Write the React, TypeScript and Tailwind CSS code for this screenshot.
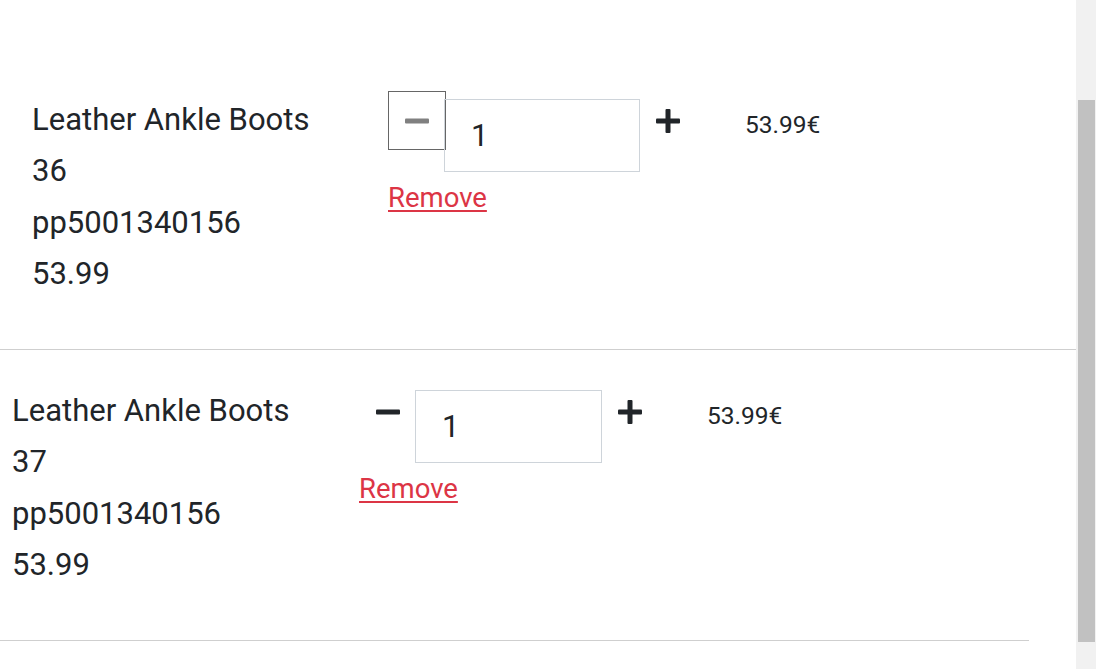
type Item = {
  name: string;
  size: string;
  sku: string;
  price: string;
};

const items: Item[] = [
  { name: "Leather Ankle Boots", size: "36", sku: "pp5001340156", price: "53.99" },
  { name: "Leather Ankle Boots", size: "37", sku: "pp5001340156", price: "53.99" },
];

export default function App() {
  return (
    <div
      className="flex h-[669px] w-[1096px] overflow-hidden bg-white text-[#212529]"
      style={{ fontFamily: "Roboto, 'Noto Sans', sans-serif" }}
    >
      <main className="flex-1">
        <div className="h-[59px]" />
        <CartRow item={items[0]} focused />
        <CartRow item={items[1]} />
      </main>
      <div className="flex w-[20px] flex-col bg-[#f1f1f1] pl-[2px] pr-[1px] pt-[100px] pb-[27px]">
        <div className="flex-1 bg-[#c1c1c1]" />
      </div>
    </div>
  );
}

function MinusIcon() {
  return (
    <svg width="24" height="6" viewBox="0 0 24 6">
      <rect x="0" y="0.5" width="24" height="5" rx="1" fill="currentColor" />
    </svg>
  );
}

function PlusIcon() {
  return (
    <svg width="24" height="24" viewBox="0 0 24 24">
      <rect x="0" y="9.5" width="24" height="5" rx="1" fill="currentColor" />
      <rect x="9.5" y="0" width="5" height="24" rx="1" fill="currentColor" />
    </svg>
  );
}

function CartRow({ item, focused = false }: { item: Item; focused?: boolean }) {
  return (
    <div
      className={`flex h-[291px] border-b border-[#cfcfcf] ${
        focused ? "w-[1076px]" : "w-[1029px]"
      }`}
    >
      <div
        className={`pt-[35px] text-[31px] leading-[51.4px] ${
          focused ? "w-[388px] pl-[32px]" : "w-[359px] pl-[12px]"
        }`}
      >
        <div>{item.name}</div>
        <div>{item.size}</div>
        <div>{item.sku}</div>
        <div>{item.price}</div>
      </div>

      <div className="flex flex-col pt-[32px]">
        <div className="flex items-start">
          <button
            className={`flex h-[59px] w-[58px] items-center justify-center ${
              focused ? "border border-[#666666] text-[#808080]" : "text-[#212529]"
            }`}
          >
            <MinusIcon />
          </button>
          <input
            readOnly
            value="1"
            className={`-ml-[2px] mt-[8px] h-[73px] border border-[#ced4da] pl-[26px] text-[31px] outline-none ${
              focused ? "w-[196px]" : "w-[187px]"
            }`}
          />
          <button className="flex h-[59px] w-[56px] items-center justify-center text-[#212529]">
            <PlusIcon />
          </button>
        </div>
        <a
          href="#"
          className="mt-[10px] w-fit text-[27.5px] leading-[32px] text-[#dc3545] underline underline-offset-[3px]"
        >
          Remove
        </a>
      </div>

      <div className="pl-[49px] pt-[51px] text-[24.5px] leading-[30px]">
        {item.price}€
      </div>
    </div>
  );
}
